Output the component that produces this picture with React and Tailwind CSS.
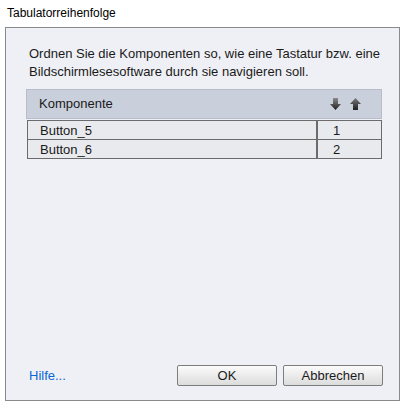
import React from 'react'

const font = { fontFamily: '"Liberation Sans", Arial, sans-serif' }

function ArrowDown() {
  return (
    <svg width="11" height="12" viewBox="0 0 11 12">
      <defs>
        <linearGradient id="ad" x1="0" y1="0" x2="0" y2="1">
          <stop offset="0" stopColor="#8a8a8a" />
          <stop offset="1" stopColor="#1e1e1e" />
        </linearGradient>
      </defs>
      <path d="M3 0 H8 V6 H11 L5.5 12 L0 6 H3 Z" fill="url(#ad)" />
    </svg>
  )
}

function ArrowUp() {
  return (
    <svg width="11" height="12" viewBox="0 0 11 12">
      <defs>
        <linearGradient id="au" x1="0" y1="0" x2="0" y2="1">
          <stop offset="0" stopColor="#7a7a7a" />
          <stop offset="1" stopColor="#1e1e1e" />
        </linearGradient>
      </defs>
      <path d="M5.5 0 L11 6 H8 V12 H3 V6 H0 Z" fill="url(#au)" />
    </svg>
  )
}

function Row({ name, idx }) {
  return (
    <div className="flex h-[20px] -mt-px first:mt-0">
      <div className="w-[290px] border border-[#6b6b6b] bg-[#e9eaee] pl-[12px] pt-px flex items-center text-[13px] text-[#1a1a1a]">
        {name}
      </div>
      <div className="flex-1 border border-[#6b6b6b] bg-[#e9eaee] pl-[15px] pt-px flex items-center text-[13px] text-[#1a1a1a]">
        {idx}
      </div>
    </div>
  )
}

function Btn({ children }) {
  return (
    <button className="w-[100px] h-[21px] rounded-[2px] border border-[#7d7d7d] bg-gradient-to-b from-[#fbfbfb] to-[#dcdcdc] text-[13px] text-[#1a1a1a] flex items-center justify-center" style={font}>
      {children}
    </button>
  )
}

export default function App() {
  return (
    <div className="w-[405px] h-[404px] bg-white overflow-hidden" style={font}>
      <div className="h-[27px] pl-[7px] pt-[5px] text-[12px] text-black leading-[16px]">
        Tabulatorreihenfolge
      </div>
      <div className="ml-[5px] w-[395px] h-[374px] border border-[#888a8e] bg-[#eff0f5] flex flex-col">
        <div className="pl-[23px] pr-[17px] pt-[17px] text-[13px] leading-[18px] text-[#1a1a1a]">
          Ordnen Sie die Komponenten so, wie eine Tastatur bzw. eine Bildschirmlesesoftware durch sie navigieren soll.
        </div>
        <div className="ml-[20px] w-[356px] mt-[8px]">
          <div className="h-[30px] border border-[#b7bdcb] bg-[#c9d0dc] flex items-center pl-[12px] pr-[20px] text-[13px] text-[#1a1a1a]">
            <span className="flex-1">Komponente</span>
            <div className="flex items-center gap-[9px]">
              <ArrowDown />
              <ArrowUp />
            </div>
          </div>
          <div className="ml-px mt-[1px] flex flex-col">
            <Row name="Button_5" idx="1" />
            <Row name="Button_6" idx="2" />
          </div>
        </div>
        <div className="flex-1" />
        <div className="flex items-center pl-[23px] pr-[16px] pb-[14px]">
          <a className="flex-1 text-[13px] text-[#0b66d6] cursor-pointer">Hilfe...</a>
          <div className="flex gap-[6px]">
            <Btn>OK</Btn>
            <Btn>Abbrechen</Btn>
          </div>
        </div>
      </div>
    </div>
  )
}
